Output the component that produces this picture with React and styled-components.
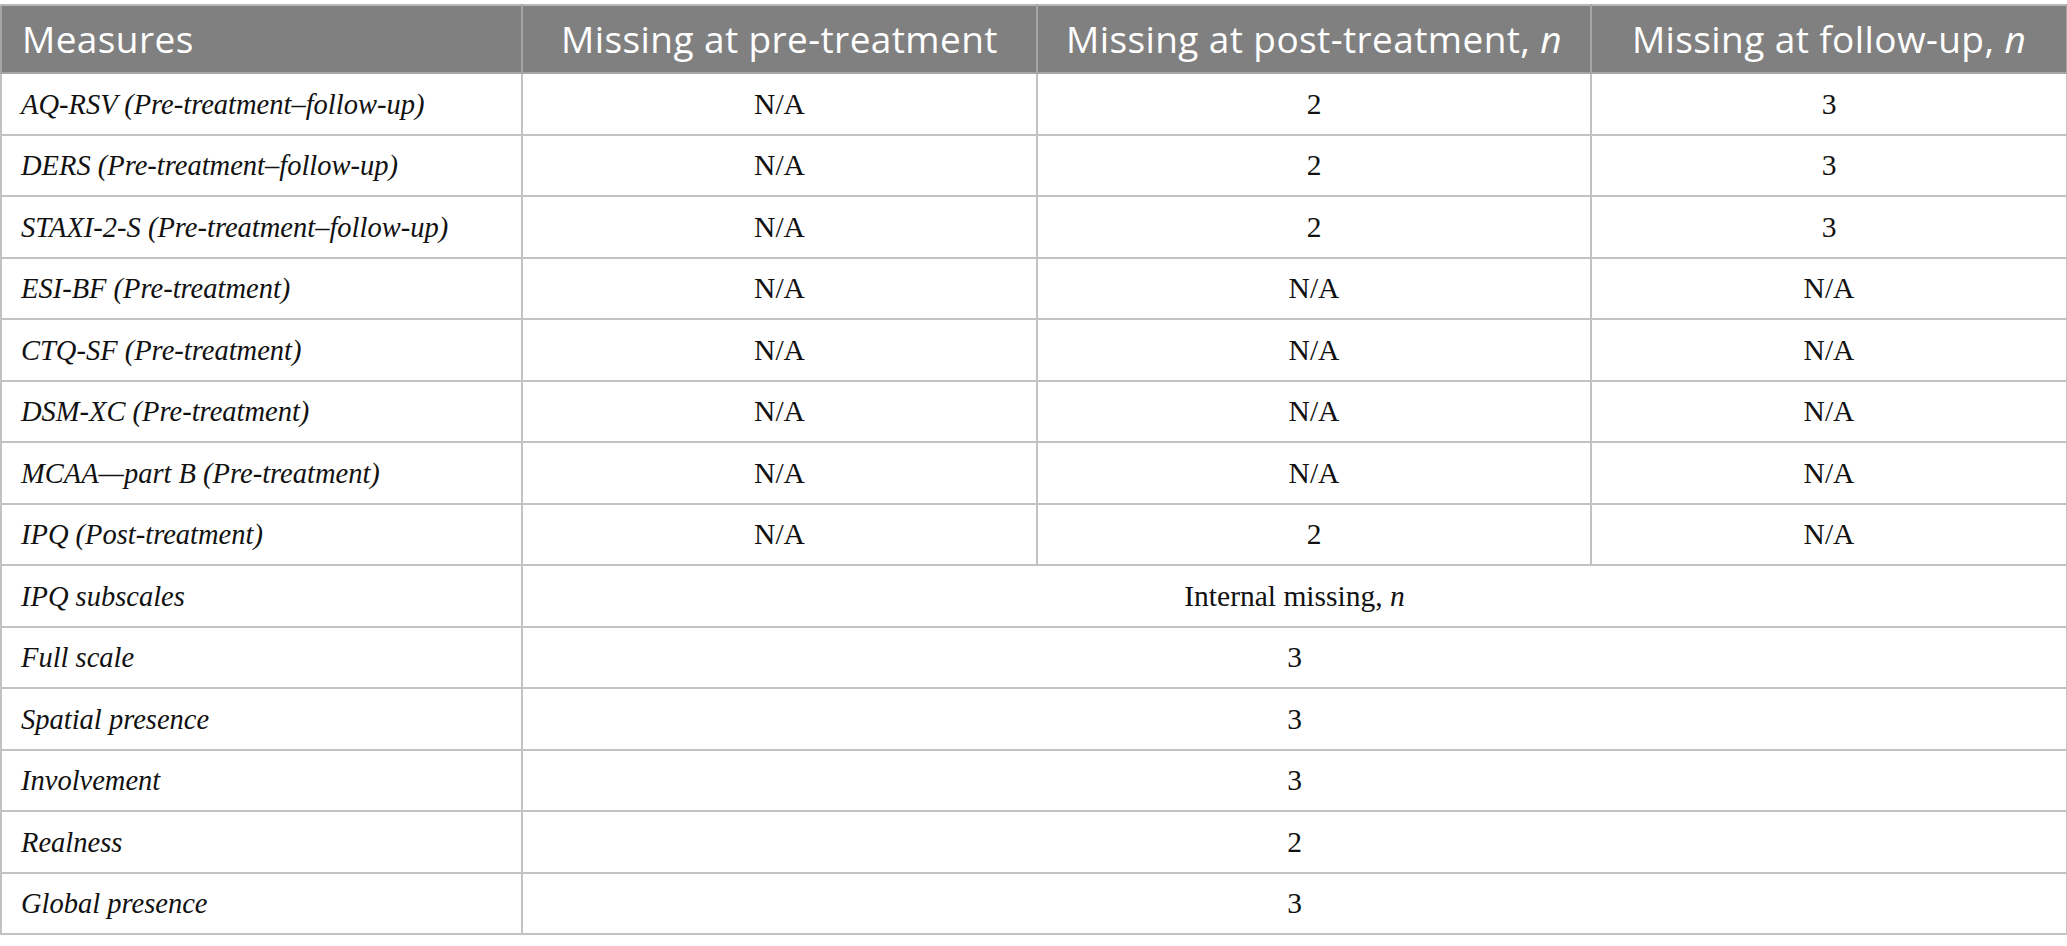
import React from "react";
import styled, { createGlobalStyle } from "styled-components";

const Global = createGlobalStyle`
  html, body { margin: 0; padding: 0; background: #ffffff; }
  body { padding-top: 4px; }
`;

const Table = styled.table`
  width: 2066px;
  border-collapse: collapse;
  table-layout: fixed;
  font-family: "Liberation Serif", "Times New Roman", serif;
  color: #111;
`;

const HeadRow = styled.tr`
  height: 68px;
  background: #808080;
`;

const Th = styled.th`
  font-family: "Open Sans", "Noto Sans", sans-serif;
  font-weight: 400;
  font-size: 37px;
  line-height: 1.2;
  color: #ffffff;
  text-align: ${(p) => (p.$left ? "left" : "center")};
  padding: 0 ${(p) => (p.$left ? "20px" : "4px")};
  border: 2px solid #a6a6a6;
  border-top: 2px solid #b8b8b8;
  white-space: nowrap;
  letter-spacing: 0.4px;
`;

const Row = styled.tr`
  height: 61.5px;
`;

const Label = styled.td`
  font-style: italic;
  font-size: 28.5px;
  padding: 2px 19px 0;
  border: 2px solid #c2c2c2;
  white-space: nowrap;
`;

const Cell = styled.td`
  font-size: 29.5px;
  padding-top: 2px;
  text-align: center;
  border: 2px solid #c2c2c2;
  white-space: nowrap;
`;

const Em = styled.i`
  font-style: italic;
`;

const measures = [
  ["AQ-RSV (Pre-treatment–follow-up)", "N/A", "2", "3"],
  ["DERS (Pre-treatment–follow-up)", "N/A", "2", "3"],
  ["STAXI-2-S (Pre-treatment–follow-up)", "N/A", "2", "3"],
  ["ESI-BF (Pre-treatment)", "N/A", "N/A", "N/A"],
  ["CTQ-SF (Pre-treatment)", "N/A", "N/A", "N/A"],
  ["DSM-XC (Pre-treatment)", "N/A", "N/A", "N/A"],
  ["MCAA—part B (Pre-treatment)", "N/A", "N/A", "N/A"],
  ["IPQ (Post-treatment)", "N/A", "2", "N/A"],
];

const subscales = [
  ["Full scale", "3"],
  ["Spatial presence", "3"],
  ["Involvement", "3"],
  ["Realness", "2"],
  ["Global presence", "3"],
];

export default function App() {
  return (
    <>
      <Global />
      <Table>
        <colgroup>
          <col style={{ width: 521 }} />
          <col style={{ width: 515 }} />
          <col style={{ width: 554 }} />
          <col style={{ width: 476 }} />
        </colgroup>
        <thead>
          <HeadRow>
            <Th $left>Measures</Th>
            <Th>Missing at pre-treatment</Th>
            <Th>
              Missing at post-treatment, <Em>n</Em>
            </Th>
            <Th>
              Missing at follow-up, <Em>n</Em>
            </Th>
          </HeadRow>
        </thead>
        <tbody>
          {measures.map(([m, a, b, c]) => (
            <Row key={m}>
              <Label>{m}</Label>
              <Cell>{a}</Cell>
              <Cell>{b}</Cell>
              <Cell>{c}</Cell>
            </Row>
          ))}
          <Row>
            <Label>IPQ subscales</Label>
            <Cell colSpan={3}>
              Internal missing, <Em>n</Em>
            </Cell>
          </Row>
          {subscales.map(([m, v]) => (
            <Row key={m}>
              <Label>{m}</Label>
              <Cell colSpan={3}>{v}</Cell>
            </Row>
          ))}
        </tbody>
      </Table>
    </>
  );
}
